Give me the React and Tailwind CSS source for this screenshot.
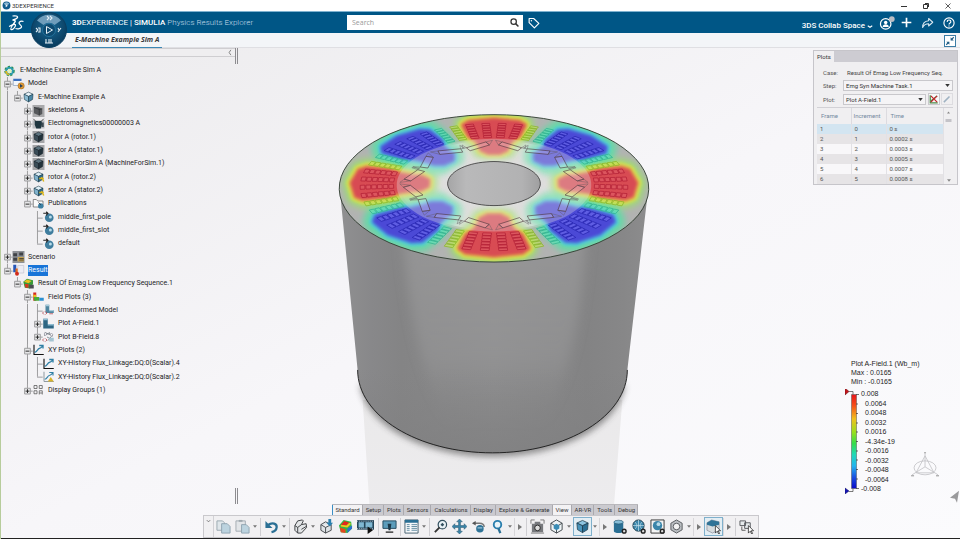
import React from 'react';
import clsx from 'clsx';

/* ---------- small drawings ---------- */

const Svg = ({ box = '0 0 16 16', className, children }) => (
  <svg viewBox={box} className={className} fill="none" aria-hidden="true">
    {children}
  </svg>
);

const Cube = ({ top = '#9cc8dc', left = '#3f7f9f', right = '#1f5573', line = '#1b3a4b' }) => (
  <g stroke={line} strokeWidth="0.8" strokeLinejoin="round">
    <path d="M8 1.5 14 4.3 8 7.2 2 4.3Z" fill={top} />
    <path d="M2 4.3 8 7.2V14.5L2.6 11.3Z" fill={left} />
    <path d="M14 4.3 8 7.2V14.5l5.4-3.2Z" fill={right} />
  </g>
);

const treeIcons = {
  gear: (
    <>
      <circle cx="8" cy="8" r="5" stroke="#2f8f4f" strokeWidth="4" strokeDasharray="2.6 1.6" />
      <circle cx="8" cy="8" r="4.6" stroke="#2a9bb0" strokeWidth="2.4" />
      <path d="M3.4 8a4.6 4.6 0 0 0 4.6 4.6" stroke="#e0b820" strokeWidth="2.4" />
      <circle cx="8" cy="8" r="2.6" fill="#dff2c0" />
    </>
  ),
  model: (
    <>
      <path d="M1 2h11v9H1z" fill="#f2f6fb" />
      <path d="M1 1h11v3H1z" fill="#3a6fc0" />
      <path d="M1 3v7h7" stroke="#8fa3bd" />
      <circle cx="11.5" cy="10.5" r="4.2" fill="#e29a33" stroke="#8a5a1a" strokeWidth="0.6" />
      <path d="M10 8v5l4-2.5z" fill="#24415f" />
    </>
  ),
  cube: <Cube top="#e8f4fa" left="#8bbcd4" right="#4b87a6" />,
  skeleton: (
    <>
      <path d="M0 0h16v16H0z" fill="#a9a9ab" />
      <path d="M2 3h6l5 2v7l-4 2-7-3z" fill="#57595c" />
      <path d="M9 5v9M2 3l7 3 4-1" stroke="#2e3033" />
    </>
  ),
  electro: (
    <>
      <path d="M0 3h16v11H0z" fill="#b9bcc0" />
      <path d="M1 1 4 4M15 1l-3 3" stroke="#222" />
      <path d="M3 4h9l1 4-2 6H5L3 9z" fill="#1e3640" />
      <path d="M12 6h3v6h-3z" fill="#3c4a52" />
    </>
  ),
  dark: (
    <>
      <path d="M0 0h16v16H0z" fill="#a4a5a8" />
      <Cube top="#5d7480" left="#3a4d58" right="#22323b" line="#18242b" />
    </>
  ),
  instance: (
    <>
      <Cube top="#dff0f8" left="#7fb2cd" right="#2d6b8b" />
      <path d="M9 10h6M12 8l3 6" stroke="#d9b41c" strokeWidth="2" />
    </>
  ),
  publications: (
    <>
      <path d="M1 2h4l2 2h7v8H1z" fill="#fafafa" stroke="#555" strokeWidth="0.9" />
      <circle cx="11" cy="10.5" r="3.6" fill="#3b7fa3" />
      <path d="M8 6 11 9" stroke="#223" />
    </>
  ),
  sphere: (
    <>
      <circle cx="9" cy="9" r="5.8" fill="#3f7d9e" />
      <circle cx="10.5" cy="8" r="2" fill="#b9dbe9" />
      <path d="M1 3h6l-2-2M7 3 5 6" stroke="#222" strokeWidth="1.5" />
    </>
  ),
  scenario: (
    <>
      <path d="M0 0h16v16H0z" fill="#8d9096" />
      <path d="M1 3h5v4H1zM1 9h5v4H1zM9 2h5v4H9z" fill="#3f4247" />
      <path d="M7 8h8v6H7z" fill="#c5a14b" />
      <path d="M9 10h6M9 12h6" stroke="#333" />
    </>
  ),
  result: (
    <>
      <path d="M7 2h8v10H7z" fill="#ececf3" stroke="#b7b7c6" strokeWidth="0.7" />
      <path d="M1 1h4v10H1z" fill="#2456b8" />
      <path d="M4 6h3v7H4z" fill="#e2661e" />
      <circle cx="6" cy="13" r="2.6" fill="#d12b1d" />
    </>
  ),
  sequence: (
    <>
      <path d="M1 5 6 1l8 2v5l-4 6-7-1z" fill="#3a9b3a" />
      <path d="M2 5 6 2l6 2-4 3z" fill="#e8c21f" />
      <path d="M3 8h5v5H4z" fill="#d23a22" />
      <path d="M9 9h6v5H9z" fill="#4a4d52" />
    </>
  ),
  field: (
    <>
      <path d="M1 2h4v11H1z" fill="#d42a20" />
      <path d="M1 5h4v3H1z" fill="#e8c21f" />
      <path d="M2 8h7v5H2z" fill="#46ad3b" />
      <path d="M9 9h6v4H9z" fill="#2d8fd0" />
    </>
  ),
  undeformed: (
    <>
      <path d="M4 1h5v7h6v4H4z" fill="#4f86a0" />
      <path d="M4 1h5v2H4zM9 8h6v1.500H9z" fill="#a8cadb" />
      <path d="m2 10-2 2 2 2M4 10l2 2-2 2M9 13h5" stroke="#b3404a" />
    </>
  ),
  plot: (
    <>
      <path d="M1 1h6v7h8v6H1z" fill="#2f6784" />
      <path d="M1 1h6v2H1zM7 8h8v2H7z" fill="#8fbdd2" />
    </>
  ),
  plotB: (
    <>
      <path d="M3 2 10 5M2 6l8-4M9 3l5 4M6 8l8 4M12 7l-5 6" stroke="#6a7178" />
      <circle cx="4" cy="4" r="1.6" fill="#fff" stroke="#556" strokeWidth="0.6" />
      <circle cx="12" cy="5" r="1.600" fill="#fff" stroke="#556" strokeWidth="0.6" />
      <path d="M9 9h6v5H9z" fill="#a5c5d3" />
      <path d="m2 10-2 2 2 2M4 10l2 2-2 2" stroke="#b3404a" />
    </>
  ),
  xy: (
    <>
      <path d="M2 1v13h13" stroke="#111" strokeWidth="1.5" />
      <path d="M3 11c3 0 4-5 6-5s3-1 5-4M9 2h5v4" stroke="#2f7fa5" strokeWidth="1.8" />
    </>
  ),
  xyWarn: (
    <>
      <path d="M2 1v13h13" stroke="#8d979e" strokeWidth="1.3" />
      <path d="M3 11c3 0 4-5 6-5s3-1 5-4M9 2h5v4" stroke="#2f7fa5" strokeWidth="1.5" />
      <path d="m11 8 4 6H7z" fill="#d8b32a" />
    </>
  ),
  groups: (
    <path d="M2 2h4v4H2zM9 2h4v4H9zM2 9h4v4H2zM9 14V9h4v5M9 12h4" stroke="#555" />
  ),
};

/* ---------- specification tree ---------- */

const tree = {
  label: 'E-Machine Example Sim A',
  icon: 'gear',
  children: [
    {
      label: 'Model',
      icon: 'model',
      children: [
        {
          label: 'E-Machine Example A',
          icon: 'cube',
          children: [
            { label: 'skeletons A', icon: 'skeleton', closed: true },
            { label: 'Electromagnetics00000003 A', icon: 'electro', closed: true },
            { label: 'rotor A (rotor.1)', icon: 'dark', closed: true },
            { label: 'stator A (stator.1)', icon: 'dark', closed: true },
            { label: 'MachineForSim A (MachineForSim.1)', icon: 'dark', closed: true },
            { label: 'rotor A (rotor.2)', icon: 'instance', closed: true },
            { label: 'stator A (stator.2)', icon: 'instance', closed: true },
            {
              label: 'Publications',
              icon: 'publications',
              children: [
                { label: 'middle_first_pole', icon: 'sphere' },
                { label: 'middle_first_slot', icon: 'sphere' },
                { label: 'default', icon: 'sphere' },
              ],
            },
          ],
        },
      ],
    },
    { label: 'Scenario', icon: 'scenario', closed: true },
    {
      label: 'Result',
      icon: 'result',
      selected: true,
      children: [
        {
          label: 'Result Of Emag Low Frequency Sequence.1',
          icon: 'sequence',
          children: [
            {
              label: 'Field Plots (3)',
              icon: 'field',
              children: [
                { label: 'Undeformed Model', icon: 'undeformed' },
                { label: 'Plot A-Field.1', icon: 'plot', closed: true },
                { label: 'Plot B-Field.8', icon: 'plotB', closed: true },
              ],
            },
            {
              label: 'XY Plots (2)',
              icon: 'xy',
              children: [
                { label: 'XY-History Flux_Linkage:DQ:0(Scalar).4', icon: 'xy' },
                { label: 'XY-History Flux_Linkage:DQ:0(Scalar).2', icon: 'xyWarn' },
              ],
            },
            { label: 'Display Groups (1)', icon: 'groups', closed: true },
          ],
        },
      ],
    },
  ],
};

// guides: one entry per ancestor level, true when its line runs on below
const flatten = (node, guides = [], last = true, level = 0) => [
  { node, guides, last, level },
  ...(node.children || []).flatMap((child, i, all) =>
    flatten(child, level > 0 ? [...guides, !last] : [], i === all.length - 1, level + 1)
  ),
];

const rows = flatten(tree);

const TreeRow = ({ node, guides, last, level }) => {
  const expandable = node.children || node.closed;
  return (
    <li className="flex items-center min-h-0 pl-px">
      {guides.map((on, i) => (
        <span key={i} className="w-[10px] h-full flex justify-center">
          {on && <span className="w-px h-full bg-[#9a9a9c]"></span>}
        </span>
      ))}
      {level > 0 && (
        <Svg box="0 0 10 14" className="w-[10px] h-full shrink-0 overflow-visible">
          <path d={last ? 'M5.500 0V7' : 'M5.500 0V14'} stroke="#9a9a9c" />
          <path d="M5 7.500H11" stroke="#9a9a9c" />
          {expandable && (
            <>
              <path d="M2.500 4.500h6v6h-6z" fill="#e6e6e8" stroke="#9a9a9c" />
              <path d="M3.500 7.500h4" stroke="#222" />
              {node.closed && <path d="M5.500 5.500v4" stroke="#222" />}
            </>
          )}
        </Svg>
      )}
      <Svg className={clsx('w-[13px] h-[12px] shrink-0', level === 0 && 'ml-px mr-px')}>{treeIcons[node.icon]}</Svg>
      <span
        className={clsx(
          'ml-[3px] whitespace-nowrap leading-[11px]',
          node.selected ? 'bg-[#1874d8] text-white' : 'text-[#1c1c1e]'
        )}
      >
        {node.label}
      </span>
    </li>
  );
};

const Grip = () => <div className="w-[3px] h-[16px] border-x border-[#8d8c90]"></div>;

const TreePanel = () => (
  <aside className="w-[237px] shrink-0 flex flex-col">
    <div className="flex h-[16px]">
      <div className="flex-1 h-[9px] flex justify-end items-center border-y border-[#cfced1] bg-[#efeef0] pr-[2px]">
        <button aria-label="Collapse tree" className="w-[6px] h-[7px]">
          <Svg box="0 0 6 8" className="w-full h-full">
            <path d="M4 1 2 4l2 3" stroke="#777" />
          </Svg>
        </button>
      </div>
      <Grip />
    </div>
    <ul className="grid auto-rows-fr h-[333px] text-[7px] font-['Roboto',sans-serif]">
      {rows.map((row) => (
        <TreeRow key={row.node.label} {...row} />
      ))}
    </ul>
    <div className="flex justify-end mt-auto">
      <Grip />
    </div>
  </aside>
);

/* ---------- 3D view ---------- */

// unit disc seen in perspective: the top face of the machine
const flat = (x, y) => {
  const w = 1 - 0.071 * y;
  return `${(493.5 + (154.5 * x) / w).toFixed(1)} ${(183 + (73.4 * y) / w).toFixed(1)}`;
};

const project = (r, deg) => {
  const a = (deg * Math.PI) / 180;
  return flat(r * Math.cos(a), r * Math.sin(a));
};

const ring = (r) => {
  const pts = [];
  for (let d = 0; d < 360; d += 5) pts.push(project(r, d));
  return `M${pts.join('L')}Z`;
};

const rotated = (deg, pts) => {
  const a = (deg * Math.PI) / 180;
  return `M${pts
    .map(([x, y]) => flat(x * Math.cos(a) - y * Math.sin(a), x * Math.sin(a) + y * Math.cos(a)))
    .join('L')}Z`;
};

const poles = [0, 45, 90, 135, 180, 225, 270, 315].map((deg, i) => ({ deg, hot: i % 2 === 0 }));

const lobe = [
  [0.43, -5], [0.43, 5], [0.48, 10], [0.55, 10], [0.62, 11], [0.7, 14], [0.86, 14], [0.9, 11],
  [0.92, 0], [0.9, -11], [0.86, -14], [0.7, -14], [0.62, -11], [0.55, -10], [0.48, -10],
];

const lobePath = (deg) => `M${lobe.map(([r, a]) => project(r, deg + a)).join('L')}Z`;

const slots = Array.from({ length: 48 }, (_, i) => {
  const deg = 3.75 + i * 7.5;
  const fromHot = Math.abs(deg - 90 * Math.round(deg / 90));
  const color = fromHot < 15 ? '#b01c34' : fromHot < 22 ? '#86b422' : fromHot < 30 ? '#2cb08e' : '#2422ae';
  const tint = fromHot < 15 ? '#e0606a' : fromHot < 22 ? '#c6e650' : fromHot < 30 ? '#60e0b8' : '#7472f0';
  let d = '';
  for (let c = 0; c < 6; c++) {
    const r = 0.65 + c * 0.037;
    d += rotated(deg, [[r, -0.027], [r + 0.03, -0.027], [r + 0.03, 0.027], [r, 0.027]]);
  }
  return { d, color, tint };
});

const magnetArm = (s) => [[0.585, 0.055 * s], [0.5, 0.185 * s], [0.455, 0.16 * s], [0.54, 0.03 * s]];

const magnets = poles.map(({ deg }) => rotated(deg, magnetArm(1)) + rotated(deg, magnetArm(-1))).join('');

const barriers = poles
  .map(({ deg }) =>
    [1, -1]
      .map((s) => rotated(deg, [[0.61, 0.01 * s], [0.585, 0.055 * s], [0.54, 0.03 * s]]) + rotated(deg, [[0.5, 0.185 * s], [0.54, 0.215 * s], [0.49, 0.21 * s]]))
      .join('')
  )
  .join('');

const bodyPath = 'M339 188 357 370C357 416 417 453 492 453S627 416 627 370L648 188Z';

const Scene = () => (
  <svg viewBox="0 48 960 491" className="absolute inset-0 w-full h-full" role="img" aria-label="A-Field plot on the machine">
    <defs>
      <linearGradient id="body" x1="339" x2="648" y1="0" y2="0" gradientUnits="userSpaceOnUse">
        <stop offset="0" stopColor="#909091" />
        <stop offset="0.1" stopColor="#88888a" />
        <stop offset="0.2" stopColor="#848485" />
        <stop offset="0.5" stopColor="#8a8a8b" />
        <stop offset="0.8" stopColor="#838384" />
        <stop offset="0.92" stopColor="#878788" />
        <stop offset="1" stopColor="#8c8c8d" />
      </linearGradient>
      <linearGradient id="glow" x1="0" x2="0" y1="250" y2="425" gradientUnits="userSpaceOnUse">
        <stop offset="0" stopColor="#a0a0a1" stopOpacity="0.55" />
        <stop offset="0.6" stopColor="#9c9c9d" stopOpacity="0.45" />
        <stop offset="1" stopColor="#909091" stopOpacity="0" />
      </linearGradient>
      <linearGradient id="shade" x1="0" x2="0" y1="370" y2="453" gradientUnits="userSpaceOnUse">
        <stop offset="0" stopColor="#828283" stopOpacity="0" />
        <stop offset="1" stopColor="#808081" stopOpacity="0.8" />
      </linearGradient>
      <linearGradient id="bore" x1="447" x2="540" y1="0" y2="0" gradientUnits="userSpaceOnUse">
        <stop offset="0" stopColor="#a5a5a6" />
        <stop offset="0.2" stopColor="#b9b9ba" />
        <stop offset="0.8" stopColor="#b2b2b3" />
        <stop offset="1" stopColor="#9f9fa0" />
      </linearGradient>
      <linearGradient id="mirror" x1="0" x2="0" y1="400" y2="515" gradientUnits="userSpaceOnUse">
        <stop offset="0" stopColor="#eae9ea" />
        <stop offset="1" stopColor="#edecee" />
      </linearGradient>
      <filter id="soft1"><feGaussianBlur stdDeviation="1.5" /></filter>
      <filter id="soft2"><feGaussianBlur stdDeviation="3" /></filter>
      <filter id="soft3"><feGaussianBlur stdDeviation="6" /></filter>
      <clipPath id="face"><path d={ring(1)} /></clipPath>
      <clipPath id="side"><path d={bodyPath} /></clipPath>
    </defs>

    <path d="M362 400H622L611 539H371Z" fill="url(#mirror)" />
    <path d="M359 385C366 430 430 457 492 457S618 430 625 385Z" fill="#333" opacity="0.5" filter="url(#soft2)" />
    <path d={bodyPath} fill="url(#body)" />
    <g clipPath="url(#side)">
      <path d="M402 235H586C582 320 566 385 540 430H450C425 385 408 320 402 235Z" fill="url(#glow)" filter="url(#soft3)" />
    </g>
    <path d={bodyPath} fill="url(#shade)" />
    <path d="M357 370C357 416 417 453 492 453S627 416 627 370" stroke="#1a1a1a" fill="none" strokeWidth="0.9" />

    <path d={ring(1)} fill="#b2b3b2" />
    <g clipPath="url(#face)">
      <path d={ring(0.61)} fill="#dcdcdb" />
      <g filter="url(#soft2)" strokeLinejoin="round">
        {poles.map(({ deg, hot }) => (
          <path key={deg} d={lobePath(deg)} strokeWidth={hot ? 20 : 23} stroke={hot ? '#9ae06c' : '#54e2a4'} fill="#8fdc9c" opacity="0.8" />
        ))}
      </g>
      <g filter="url(#soft1)" strokeLinejoin="round">
        {poles.map(({ deg, hot }) => (
          <path key={deg} d={lobePath(deg)} strokeWidth={hot ? 12 : 11} stroke={hot ? '#d8e24a' : '#4ccfd8'} fill="none" opacity="0.85" />
        ))}
      </g>
      <g filter="url(#soft1)" strokeLinejoin="round">
        {poles.map(({ deg, hot }) => (
          <path key={deg} d={lobePath(deg)} strokeWidth="6" stroke={hot ? '#e8904a' : '#4a80e0'} fill="none" />
        ))}
        {poles.map(({ deg, hot }) => (
          <path key={deg} d={lobePath(deg)} strokeWidth="3" stroke={hot ? '#d84c52' : '#4b49d6'} fill={hot ? '#d84c52' : '#4b49d6'} />
        ))}
      </g>
      <path d={ring(0.63)} fill="#e6e4e4" opacity="0.32" />
      <path d={ring(0.33)} fill="#dedddd" opacity="0.9" filter="url(#soft2)" />
    </g>

    {slots.map((slot, i) => (
      <path key={i} d={slot.d} stroke={slot.color} fill={slot.tint} fillOpacity="0.5" strokeWidth="0.7" />
    ))}
    <path d={magnets} stroke="#4a3038" fill="#fff" fillOpacity="0.15" strokeWidth="0.6" />
    <path d={barriers} stroke="#5a5458" fill="none" strokeWidth="0.4" />
    <path d={ring(0.3)} fill="url(#bore)" stroke="#333" strokeWidth="0.8" />
    <path d={ring(1)} fill="none" stroke="#2c3a2c" strokeWidth="0.9" />

    <g stroke="#c0c0c4" fill="none" strokeWidth="0.8">
      <ellipse cx="925" cy="468" rx="11" ry="7" />
      <path d="M925 454v13l-13 8M925 467l13 8M925 456l-9 17h18Z" />
      <path d="M924 453h2M911 476h3M936 476h3" stroke="#777" />
    </g>
    <path d="M959 491 950 498l5 1 2 4Z" fill="#9a9a9c" />
  </svg>
);

/* ---------- plots panel ---------- */

const frames = [
  ['1', '0', '0 s'],
  ['2', '1', '0.0002 s'],
  ['3', '2', '0.0003 s'],
  ['4', '3', '0.0005 s'],
  ['5', '4', '0.0007 s'],
  ['6', '5', '0.0008 s'],
];

const Dropdown = ({ id, value }) => (
  <div className="relative flex-1 h-[11px]">
    <select
      id={id}
      className="block w-full h-full appearance-none border border-[#c9c8cc] bg-[#f5f4f6] pl-[2px] text-[6px] leading-[9px] text-[#333]"
    >
      <option>{value}</option>
    </select>
    <Svg box="0 0 6 4" className="absolute right-[3px] top-1 w-[5px] h-[3px] pointer-events-none">
      <path d="M0 0h6L3 4z" fill="#333" />
    </Svg>
  </div>
);

const PlotsPanel = () => (
  <section className="mt-[2px] mr-[2px] flex flex-col border border-[#c6c5ca] bg-[#f0eff1] text-[6px] text-[#555] font-['Roboto',sans-serif]">
    <div className="h-[11px] flex bg-[#cdccd2]">
      <button className="px-[3px] bg-[#f0eff1] text-[#333] leading-[10px]">Plots</button>
    </div>
    <div className="flex flex-col gap-[2px] pt-[5px] pl-[9px] pr-1">
      <div className="flex items-center h-[11px]">
        <span className="w-5">Case:</span>
        <span className="pl-1 text-[#444] whitespace-nowrap">Result Of Emag Low Frequency Seq.</span>
      </div>
      <div className="flex items-center">
        <label htmlFor="step" className="w-5">Step:</label>
        <Dropdown id="step" value="Emg Syn Machine Task.1" />
      </div>
      <div className="flex items-center">
        <label htmlFor="plot" className="w-5">Plot:</label>
        <Dropdown id="plot" value="Plot A-Field.1" />
        <button aria-label="Hide plot" className="ml-[2px] w-[12px] h-[12px] border border-[#c9c8cc] bg-[#f8f8f8]">
          <Svg className="w-full h-full">
            <path d="M2 2v12h12" stroke="#4a8a4a" strokeWidth="2" />
            <path d="M3 11 13 3" stroke="#3b8a40" strokeWidth="2" />
            <path d="m3 3 10 10M13 3 3 13" stroke="#c4242a" strokeWidth="2" />
          </Svg>
        </button>
        <button aria-label="Edit plot" className="ml-px w-[12px] h-[12px] border border-[#dddce0]">
          <Svg className="w-full h-full">
            <path d="M3 13 12 4" stroke="#9fb2c2" strokeWidth="2.500" />
          </Svg>
        </button>
      </div>
    </div>
    <div className="flex mt-[2px] ml-[3px] mr-1 border-t border-[#d2d1d6]">
      <table className="flex-1 text-left border-collapse">
        <thead>
          <tr className="h-[16px] text-[#7489a0] leading-[8px]">
            <th className="p-0 font-normal pl-1 w-[34px]">Frame</th>
            <th className="p-0 font-normal pl-[2px] w-[35px] border-l border-[#dcdbe0]">Increment</th>
            <th className="p-0 font-normal pl-1 border-x border-[#dcdbe0]">Time</th>
          </tr>
        </thead>
        <tbody className="leading-[10px]">
          {frames.map(([frame, inc, time], i) => (
            <tr key={frame} className={i === 0 ? 'bg-[#d3e5f1]' : i % 2 ? 'bg-[#e6e4e6]' : 'bg-[#f8f7f9]'}>
              <td className="p-0 pl-[3px]">{frame}</td>
              <td className="p-0 pl-[3px] border-l border-[#e2e1e5]">{inc}</td>
              <td className="p-0 pl-[3px] border-x border-[#e2e1e5]">{time}</td>
            </tr>
          ))}
        </tbody>
      </table>
      <div className="w-[9px] flex flex-col items-center justify-between py-[2px]">
        <Svg box="0 0 6 14" className="w-[7px] h-[14px]">
          <path d="M1.500 3.500h3L3 1.500z" fill="#888" />
          <path d="M0 9h6v3H0z" fill="#c4c3c8" />
        </Svg>
        <Svg box="0 0 6 4" className="w-1 h-[3px]">
          <path d="M0 0h6L3 4z" fill="#888" />
        </Svg>
      </div>
    </div>
  </section>
);

const ticks = ['0.008', '0.0064', '0.0048', '0.0032', '0.0016', '-4.34e-19', '-0.0016', '-0.0032', '-0.0048', '-0.0064', '-0.008'];

const Legend = () => (
  <section className="mt-[174px] pl-8 font-['Liberation_Sans',sans-serif] text-[7px] text-[#1e1e1e]">
    <div className="pl-[6px] leading-[9px] whitespace-nowrap">
      <p>Plot A-Field.1 (Wb_m)</p>
      <p>Max : 0.0165</p>
      <p>Min : -0.0165</p>
    </div>
    <div className="flex h-[105px] mt-[3px]">
      <Svg box="0 0 16 105" className="w-4 h-full">
        <defs>
          <linearGradient id="rainbow" x1="0" x2="0" y1="0" y2="1">
            <stop offset="0" stopColor="#e6141a" />
            <stop offset="0.12" stopColor="#f4501a" />
            <stop offset="0.26" stopColor="#f0c01e" />
            <stop offset="0.4" stopColor="#9ade1c" />
            <stop offset="0.52" stopColor="#35dc4a" />
            <stop offset="0.64" stopColor="#1fd8b8" />
            <stop offset="0.76" stopColor="#22b4ee" />
            <stop offset="0.88" stopColor="#1a50e0" />
            <stop offset="1" stopColor="#0a0ac8" />
          </linearGradient>
        </defs>
        <path d="M6.500 5.500h5v94h-5z" fill="url(#rainbow)" stroke="#555" strokeWidth="0.5" />
        <path d="M11 5.500h3M11 15h2M11 24.500h2M11 34h2M11 43h2M11 52.500h2M11 62h2M11 71h2M11 80.500h2M11 90h2M11 99.500h3" stroke="#333" strokeWidth="0.7" />
        <path d="M4 2.500h4v3M4 102.500h4v-3" stroke="#444" strokeWidth="0.7" />
        <path d="M0-1v7l4-3.500z" fill="#c4151b" stroke="#5a1518" strokeWidth="0.5" />
        <path d="M0 99v6l4-3z" fill="#1414b8" stroke="#15155a" strokeWidth="0.5" />
      </Svg>
      <ul className="grid auto-rows-fr leading-[9px]">
        {ticks.map((t, i) => (
          <li key={t} className={i % 10 ? 'pl-1' : ''}>{t}</li>
        ))}
      </ul>
    </div>
  </section>
);

/* ---------- action bar ---------- */

const tabs = ['Standard', 'Setup', 'Plots', 'Sensors', 'Calculations', 'Display', 'Explore & Generate', 'View', 'AR-VR', 'Tools', 'Debug'];

const gearMark = <circle cx="13" cy="13" r="2" stroke="#222" strokeWidth="1.500" fill="#ddd" />;
const cursor = <path d="M10 7v8l2-2 1.500 3 1-.5L13 12.500h2.500z" fill="#fff" stroke="#222" strokeWidth="0.8" />;

const tools = [
  { name: 'Copy', art: <><path d="M1 2h6l2 2v8H1z" fill="#dfe6ea" stroke="#9aa7b0" /><path d="M6 5h6l3 3v7H6z" fill="#bcd3df" stroke="#8fa3b0" /></> },
  { name: 'Paste', art: <><path d="M1 2h10v11H1z" fill="#e2e5e8" stroke="#a3abb2" /><path d="M4 1h4v2H4z" fill="#9fa8ae" /><path d="M7 6h5l3 3v6H7z" fill="#bcd3df" stroke="#8fa3b0" /></> },
  'caret', 'sep',
  { name: 'Undo', art: <><path d="M4 6.500C9 3 14 5 13.500 9c-.3 3-3 4.500-5.500 5" stroke="#2a6f94" strokeWidth="2.400" /><path d="M1.500 2v7.500H9z" fill="#2a6f94" /></> },
  'caret', 'sep',
  { name: 'Part', art: <path d="m2 7 3-5 5-1 1 1-2 4 5-1 .5 4L9 15H5l-3-3zM5 9l4-3M5 9v6M5 9 2 7M9 11l5-3" fill="#e4e6e8" stroke="#3a3d40" strokeLinejoin="round" /> },
  'caret',
  { name: 'Import', art: <><path d="m2 6 5-3 6 3v6l-6 3-5-3zM7 9v6M2 6l5 3 6-3" fill="#dfe3e6" stroke="#44494d" /><path d="M10 0h3v4h2l-3.500 4L8 4h2z" fill="#2a7fae" /></> },
  { name: 'Contour', art: <><path d="M1 7 6 1l8 2 1 7-5 5-7-1z" fill="#35b545" /><path d="m3 6 4-4 5 2-3 3z" fill="#e3281e" /><path d="M3 6 9 7l3-3 2 1-4 4-7-1z" fill="#f0c81e" /><path d="m2 9 6 2v4l-5-1z" fill="#e3481e" /><path d="m10 10 5-3v3l-5 5z" fill="#2a6fd0" /></> },
  { name: 'Animate', wide: true, art: <><path d="M0 2h16v9H0z" fill="#24465a" /><path d="M1.500 4h5v5h-5zM8 4h6.500v5H8z" fill="#7fb7d2" /><path d="M0 3h16M0 10h16" stroke="#9ab" strokeDasharray="1 1" /><path d="M10 8v7l5-3.500z" fill="#111" /></> },
  'sep',
  { name: 'Display', art: <><path d="M1 2h14v8H1z" fill="#5d9dbb" stroke="#234a5e" /><path d="M6 5h4l-1 7H7z" fill="#1d3949" /><path d="M4 14h8" stroke="#333" strokeWidth="1.500" /></> },
  'sep',
  { name: 'Table', art: <><path d="M1 1h14v14H1z" fill="#f6f8fa" stroke="#44606f" /><path d="M1 1h14v3H1z" fill="#2a6f94" /><path d="M3 6h3M3 8h3M3 10h3M3 12h3M8 6h6M8 8h6M8 10h6M8 12h6" stroke="#5f8ba1" /></> },
  'caret', 'sep',
  { name: 'Fit all', art: <><circle cx="10" cy="6" r="4.500" fill="#e9f2f6" stroke="#33505f" strokeWidth="1.300" /><path d="m7 9-5 5" stroke="#333" strokeWidth="2" /><path d="m8 6 2-2 2 2-2 2z" fill="#33505f" /></> },
  { name: 'Pan', art: <path d="M8 0 5 3h2v4H3V5L0 8l3 3V9h4v4H5l3 3 3-3H9V9h4v2l3-3-3-3v2H9V3h2z" fill="#3a85aa" stroke="#1c4a62" strokeWidth="0.500" /> },
  { name: 'Rotate', art: <><path d="M3 4.500h6c3 0 5 1 5 4" stroke="#777" strokeWidth="1.600" /><path d="M1 4.500 5 2v5z" fill="#555" /><circle cx="9.500" cy="10.500" r="4" fill="#2f7397" /><path d="M7 9.500h5" stroke="#bfe0ee" /></> },
  { name: 'Zoom', art: <><circle cx="8" cy="6" r="4" stroke="#2a7fae" strokeWidth="2" fill="#e9f4f9" /><path d="m9 10 2 5" stroke="#2a6f94" strokeWidth="2.500" /></> },
  'caret', 'arrow', 'sep',
  { name: 'Capture', art: <><path d="M1 1v4M1 1h4M15 1v4M15 1h-4M1 15h14" stroke="#777" /><path d="M2 5h12v9H2zM5 3h6v2H5z" fill="#77797d" /><circle cx="8" cy="9.500" r="3" fill="#ddd" stroke="#222" /></> },
  { name: 'Views', art: <><path d="m8 1 6 3.500v7L8 15l-6-3.500v-7zM8 8v7M8 8 2 4.500M8 8l6-3.500" fill="#eef3f5" stroke="#41484d" /><path d="m8 5 3 1.700v3.500L8 12l-3-1.800V6.700z" fill="#3a8cb5" /></> },
  'caret',
  { name: 'Shading', boxed: true, art: <Cube top="#8cc4e0" left="#4a94bb" right="#2a6f94" /> },
  'caret', 'arrow',
  { name: 'Material', art: <><path d="M2 3v10c0 2.500 10 2.500 10 0V3z" fill="#2a6f94" /><ellipse cx="7" cy="3.300" rx="5" ry="2" fill="#86bdd8" stroke="#1d4c66" strokeWidth="0.600" />{gearMark}</> },
  { name: 'Ambience', art: <><circle cx="8" cy="7" r="6" fill="#3a85aa" stroke="#1d3a4a" /><path d="M2 7h12M8 1v12M4 3c3 3 3 5 0 8M12 3c-3 3-3 5 0 8" stroke="#cfe6f0" strokeWidth="0.700" />{gearMark}</> },
  { name: 'Environment', art: <><path d="M1 1h14v14H1z" fill="#f4f4f4" stroke="#333" /><circle cx="8" cy="7" r="5" fill="#3a85aa" /><circle cx="9" cy="5.500" r="2" fill="#b7dbea" />{gearMark}</> },
  { name: 'Section', art: <><path d="m8 1 6 3.500v7L8 15l-6-3.500v-7z" fill="#b9bdc1" stroke="#55595d" /><circle cx="8" cy="8" r="3.500" fill="#f3f3f3" stroke="#55595d" /></> },
  'caret', 'arrow',
  { name: 'Select', boxed: true, art: <><path d="m1 4 5-3 8 2v8l-7 4-6-3z" fill="#d7dcdf" stroke="#778" strokeWidth="0.600" /><path d="m1 4 5-3 8 2v3L7 8 1 6z" fill="#2f7397" />{cursor}</> },
  'arrow', 'sep',
  { name: 'Multi-select', art: <><path d="M1 2h6v5H1zM6 4h6v6H6z" fill="#e6eaec" stroke="#55595d" /><path d="M3 8v4h4" stroke="#555" />{cursor}</> },
];

const Tool = ({ tool }) => {
  if (tool === 'sep') return <span className="w-px h-[18px] mx-px bg-[#cfced2]"></span>;
  if (tool === 'caret')
    return (
      <button aria-label="More" className="w-[7px] h-full flex items-center justify-center">
        <Svg box="0 0 6 4" className="w-1 h-[3px]"><path d="M0 0h6L3 4z" fill="#777" /></Svg>
      </button>
    );
  if (tool === 'arrow')
    return (
      <button aria-label="Next section" className="w-[11px] h-[18px] flex items-center justify-center border-l border-[#d8d7da]">
        <Svg box="0 0 4 6" className="w-1 h-[6px]"><path d="M0 0v6l4-3z" fill="#777" /></Svg>
      </button>
    );
  return (
    <button
      aria-label={tool.name}
      className={clsx(
        'h-[19px] flex items-center justify-center border',
        tool.wide ? 'w-[22px]' : 'w-[19px]',
        tool.boxed ? 'border-[#7fb0cc] bg-[#e3eef4]' : 'border-transparent'
      )}
    >
      <Svg className={tool.wide ? 'w-[17px] h-[17px]' : 'w-[15px] h-[15px]'}>{tool.art}</Svg>
    </button>
  );
};

const ActionBar = () => (
  <footer className="relative flex flex-col items-center border-b border-[#222]">
    <div>
      <nav className="flex w-fit ml-[129px] h-[11px] border-t border-[#b9b8bc] text-[6px] text-[#333] font-['Roboto',sans-serif]">
        {tabs.map((tab, i) => (
          <button
            key={tab}
            className={clsx(
              'pl-[3px] pr-[2px] leading-[10px] border-r border-[#aaa9ae] whitespace-nowrap',
              i === 0 && 'border-l border-l-[#3b8fc5]',
              tab === 'Standard' || tab === 'View' ? 'bg-[#f3f2f4]' : 'bg-[#cbcacf]'
            )}
          >
            {tab}
          </button>
        ))}
      </nav>
      <div className="flex items-center h-[23px] border border-[#c9c8cc] bg-[#f1f0f2] pr-[2px]">
        <button aria-label="Collapse bar" className="w-[10px] h-full pt-[3px] flex justify-center border-r border-[#d2d1d5]">
          <Svg box="0 0 6 4" className="w-[5px] h-1"><path d="m1 1 2 2 2-2" stroke="#666" /></Svg>
        </button>
        {tools.map((tool, i) => (
          <Tool key={i} tool={tool} />
        ))}
      </div>
    </div>
  </footer>
);

/* ---------- header ---------- */

const Compass = () => (
  <svg viewBox="0 0 36 36" className="w-9 h-9 shrink-0" role="img" aria-label="Compass">
    <defs>
      <radialGradient id="dial" cx="0.5" cy="0.4" r="0.6">
        <stop offset="0" stopColor="#1a6a96" />
        <stop offset="1" stopColor="#083a5c" />
      </radialGradient>
    </defs>
    <circle cx="18" cy="18" r="17.500" fill="url(#dial)" stroke="#0b3f61" />
    <path d="M6 8.500a15.500 15.500 0 0 1 24 0l-6.500 4.500a8 8 0 0 0-11 0z" fill="#6f9dbb" />
    <circle cx="18" cy="18" r="6.500" fill="#0d4a70" stroke="#2a7aa5" strokeWidth="0.800" />
    <path d="M15.500 14.500v7l6-3.500z" fill="none" stroke="#e8f2f8" />
    <path d="m16 4 2 2-2 2m3-4 2 2-2 2M5 16l2 2-2 2M7 16h2v4H7M27 20l3-4M27 16l1 2M15 27v4m3-4v4m2-4v4M14 31h8" stroke="#e3eef5" strokeWidth="1.100" fill="none" />
  </svg>
);

const Header = () => (
  <header className="relative z-10">
    <div className="h-[11px] bg-white flex items-center pl-px pr-[9px] text-[6px] text-[#333]">
      <Svg className="w-[9px] h-[9px]">
        <circle cx="8" cy="8" r="7" fill="#0f5c8c" />
        <path d="M3 5a6 6 0 0 1 10 0l-3 2H6z" fill="#8ab6d0" />
        <path d="M6.500 6v5l4-2.500z" fill="#fff" />
      </Svg>
      <span className="ml-px font-['Roboto',sans-serif]">3DEXPERIENCE</span>
      <div className="ml-auto flex gap-4 h-[6px]">
        <button aria-label="Minimize"><Svg box="0 0 6 6" className="w-[6px] h-[6px]"><path d="M0 3.500h6" stroke="#333" /></Svg></button>
        <button aria-label="Restore"><Svg box="0 0 6 6" className="w-[6px] h-[6px]"><path d="M.5 1.500h4v4h-4zM2 .5h3.500V4" stroke="#333" /></Svg></button>
        <button aria-label="Close"><Svg box="0 0 6 6" className="w-[6px] h-[6px]"><path d="m.5.5 5 5m0-5-5 5" stroke="#333" strokeWidth="0.800" /></Svg></button>
      </div>
    </div>
    <div className="h-[22px] bg-[#005686] border-t border-[#7fb2d0] flex items-center text-white">
      <div className="w-[346px] shrink-0 h-full flex items-center pl-[7px]">
        <Svg box="0 0 32 32" className="w-4 h-4 shrink-0">
          <path d="M9 2c6-1 11 0 10 3-1 3-6 4-10 5 4 0 7 1 5 4-2 4-8 8-12 9M14 13C9 20 4 27 6 29c3 2 9-5 9-9 0-2-4-1-6 0M31 13c-4-2-9 0-9 3s6 5 5 8-7 5-12 3" stroke="#fff" strokeWidth="2.500" />
        </Svg>
        <div className="self-start ml-[7px] w-9 h-9 shrink-0"><Compass /></div>
        <p className="ml-[5px] text-[8px] leading-[12px] whitespace-nowrap font-['Roboto',sans-serif]">
          <b>3D</b>EXPERIENCE | <span className="font-medium">SIMULIA</span>
          <span className="ml-[2px] font-light text-[#c4dae8]">Physics Results Explorer</span>
        </p>
      </div>
      <div className="relative w-[176px] h-[15px]">
        <input
          type="search"
          aria-label="Search"
          placeholder="Search"
          className="block w-full h-full bg-white pl-[5px] pr-4 text-[7px] leading-[15px] text-[#333] placeholder:text-[#999]"
        />
        <Svg className="absolute right-1 top-[3px] w-[9px] h-[9px]">
          <circle cx="6.500" cy="6.500" r="4.800" stroke="#333" strokeWidth="2.200" />
          <path d="m10 10 5 5" stroke="#333" strokeWidth="2.600" />
        </Svg>
      </div>
      <button aria-label="Tags" className="ml-[5px] w-3 h-3">
        <Svg className="w-full h-full">
          <path d="M1.500 2v5.500l7 7 6-6-7-6.500z" stroke="#fff" strokeWidth="1.500" strokeLinejoin="round" />
          <circle cx="4.500" cy="5" r="1" fill="#fff" />
        </Svg>
      </button>
      <div className="ml-auto flex items-center pr-[5px]">
        <button className="flex items-center mt-[7px] mr-[6px] text-[8px] font-medium leading-[10px] whitespace-nowrap font-['Roboto',sans-serif]">
          3DS Collab Space
          <Svg box="0 0 8 4" className="ml-[2px] w-[6px] h-[3px]"><path d="m1 1 3 2 3-2" stroke="#fff" strokeWidth="1.400" /></Svg>
        </button>
        <div className="flex items-center gap-[9px]">
          <button aria-label="Profile" className="w-4 h-[14px]">
            <Svg box="0 0 18 16" className="w-full h-full">
              <circle cx="7.500" cy="9" r="6" stroke="#fff" strokeWidth="1.400" />
              <circle cx="7.500" cy="7.500" r="2" fill="#fff" />
              <path d="M4 12.500c0-4 7-4 7 0z" fill="#fff" />
              <circle cx="14.500" cy="3.500" r="3.300" fill="#b9bdc4" />
            </Svg>
          </button>
          <button aria-label="Add" className="w-[11px] h-[11px] -ml-[3px]">
            <Svg className="w-full h-full"><path d="M8 1v14M1 8h14" stroke="#fff" strokeWidth="2.400" /></Svg>
          </button>
          <button aria-label="Share" className="w-[13px] h-[12px]">
            <Svg className="w-full h-full"><path d="M9.500 2 15 7l-5.500 5V9C5 9 3 11 1.500 14 1.500 9 4 5.500 9.500 5z" stroke="#dbe9f2" strokeWidth="1.400" strokeLinejoin="round" /></Svg>
          </button>
          <button aria-label="Help" className="w-3 h-3">
            <Svg className="w-full h-full">
              <circle cx="8" cy="8" r="6.800" stroke="#fff" strokeWidth="1.500" />
              <path d="M5.500 6.500c0-3.500 5-3.200 5-.3C10.500 8 8 8 8 10M8 11.200v1.500" stroke="#fff" strokeWidth="1.500" />
            </Svg>
          </button>
        </div>
      </div>
    </div>
    <div className="h-[15px] bg-[#f3f5f8] border-b border-[#dfdfe3] flex items-start justify-between pl-[71px] pr-1">
      <h1 className="h-[15px] px-[3px] text-[7px] leading-[14px] font-bold italic text-[#3a3a3c] border-b border-[#3b87b5] whitespace-nowrap">
        E-Machine Example Sim A
      </h1>
      <button aria-label="Exit full screen" className="mt-[2px] w-3 h-3 border border-[#3b7ca5] bg-white">
        <Svg className="w-full h-full">
          <path d="M9 2v5h5zM2 9h5v5z" fill="#1f5c85" />
          <path d="m14 2-4 4M2 14l4-4" stroke="#1f5c85" strokeWidth="1.800" />
        </Svg>
      </button>
    </div>
  </header>
);

const App = () => {
  return (
    <div className="min-h-screen flex flex-col border-l border-[#b7cc9c] font-['Open_Sans',sans-serif] bg-white">
      <Header />
      <main className="relative flex-1 flex flex-col bg-linear-to-br from-[#ecebed] via-[#f7f6f9] to-[#fbfbfd]">
        <Scene />
        <div className="relative flex-1 flex justify-between">
          <TreePanel />
          <div className="w-[147px] shrink-0">
            <PlotsPanel />
            <Legend />
          </div>
        </div>
        <ActionBar />
      </main>
    </div>
  );
};

export default App;
